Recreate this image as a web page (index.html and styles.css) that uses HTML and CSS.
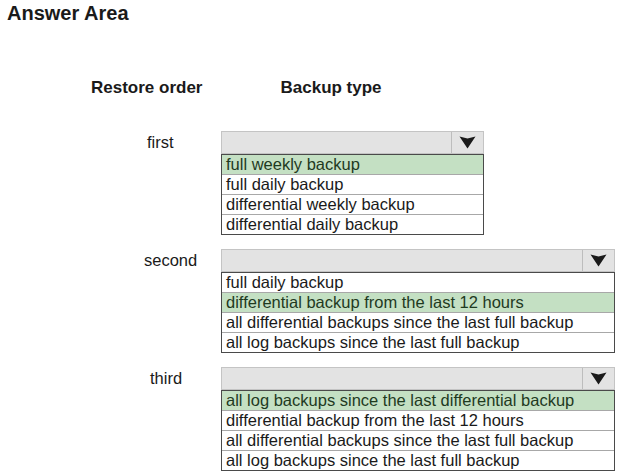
FILE: index.html
```html
<!DOCTYPE html>
<html lang="en">
<head>
    <meta charset="UTF-8">
    <title>Answer Area</title>
    <link rel="stylesheet" href="styles.css">
</head>
<body>
    <h1 class="title">Answer Area</h1>

    <div class="col-heads">
        <span class="head head-order">Restore order</span>
        <span class="head head-type">Backup type</span>
    </div>

    <div class="step">
        <div class="step-label label-first">first</div>
        <div class="select select-narrow">
            <div class="select-box">
                <span class="select-arrow">
                    <svg width="17" height="13" viewBox="0 0 17 13"><path d="M0.5 0.5 L8.5 2.5 L16.5 0.5 L8.5 12.5 Z" fill="#1a1a1a"/></svg>
                </span>
            </div>
            <ul class="options">
                <li class="picked">full weekly backup</li>
                <li>full daily backup</li>
                <li>differential weekly backup</li>
                <li>differential daily backup</li>
            </ul>
        </div>
    </div>

    <div class="step">
        <div class="step-label label-second">second</div>
        <div class="select select-wide">
            <div class="select-box">
                <span class="select-arrow">
                    <svg width="17" height="13" viewBox="0 0 17 13"><path d="M0.5 0.5 L8.5 2.5 L16.5 0.5 L8.5 12.5 Z" fill="#1a1a1a"/></svg>
                </span>
            </div>
            <ul class="options">
                <li>full daily backup</li>
                <li class="picked">differential backup from the last 12 hours</li>
                <li>all differential backups since the last full backup</li>
                <li>all log backups since the last full backup</li>
            </ul>
        </div>
    </div>

    <div class="step">
        <div class="step-label label-third">third</div>
        <div class="select select-wide">
            <div class="select-box">
                <span class="select-arrow">
                    <svg width="17" height="13" viewBox="0 0 17 13"><path d="M0.5 0.5 L8.5 2.5 L16.5 0.5 L8.5 12.5 Z" fill="#1a1a1a"/></svg>
                </span>
            </div>
            <ul class="options">
                <li class="picked">all log backups since the last differential backup</li>
                <li>differential backup from the last 12 hours</li>
                <li>all differential backups since the last full backup</li>
                <li>all log backups since the last full backup</li>
            </ul>
        </div>
    </div>
</body>
</html>
```

FILE: styles.css
```css
body {
    margin: 0;
    font-family: "Liberation Sans", Arial, sans-serif;
    color: #1a1a1a;
    background: #fff;
}

.title { margin: 0; padding: 2px 0 0 7px; font-size: 20px; font-weight: bold; }

/* column headings */
.col-heads { display: flex; margin-top: 53px; font-size: 17px; font-weight: bold; }
.head-order { margin-left: 91px; }
.head-type { margin-left: 78px; }

/* one restore step: label + dropdown */
.step { display: grid; grid-template-columns: 221px auto; margin-top: 14px; }
.col-heads + .step { margin-top: 33px; }
.step-label { font-size: 16.5px; line-height: 23px; }
.label-first { padding-left: 147px; }
.label-second { padding-left: 144px; }
.label-third { padding-left: 150px; }

.select-narrow { width: 263px; }
.select-wide { width: 394px; }

.select-box {
    display: flex;
    justify-content: flex-end;
    height: 21px;
    background: #e3e3e3;
    border: 1px solid #c4c4c4;
}
.select-arrow {
    display: flex;
    align-items: center;
    justify-content: center;
    width: 31px;
    border-left: 1px solid #bdbdbd;
}

.options {
    list-style: none;
    margin: 0;
    padding: 0;
    border: 1px solid #4a4a4a;
    font-size: 16.5px;
}
.options li {
    height: 19px;
    line-height: 19px;
    padding-left: 4px;
    white-space: nowrap;
}
.options li + li { border-top: 1px solid #a8a8a8; }
.options li.picked { background: #c4e0c3; color: #1f3a1f; }
```
